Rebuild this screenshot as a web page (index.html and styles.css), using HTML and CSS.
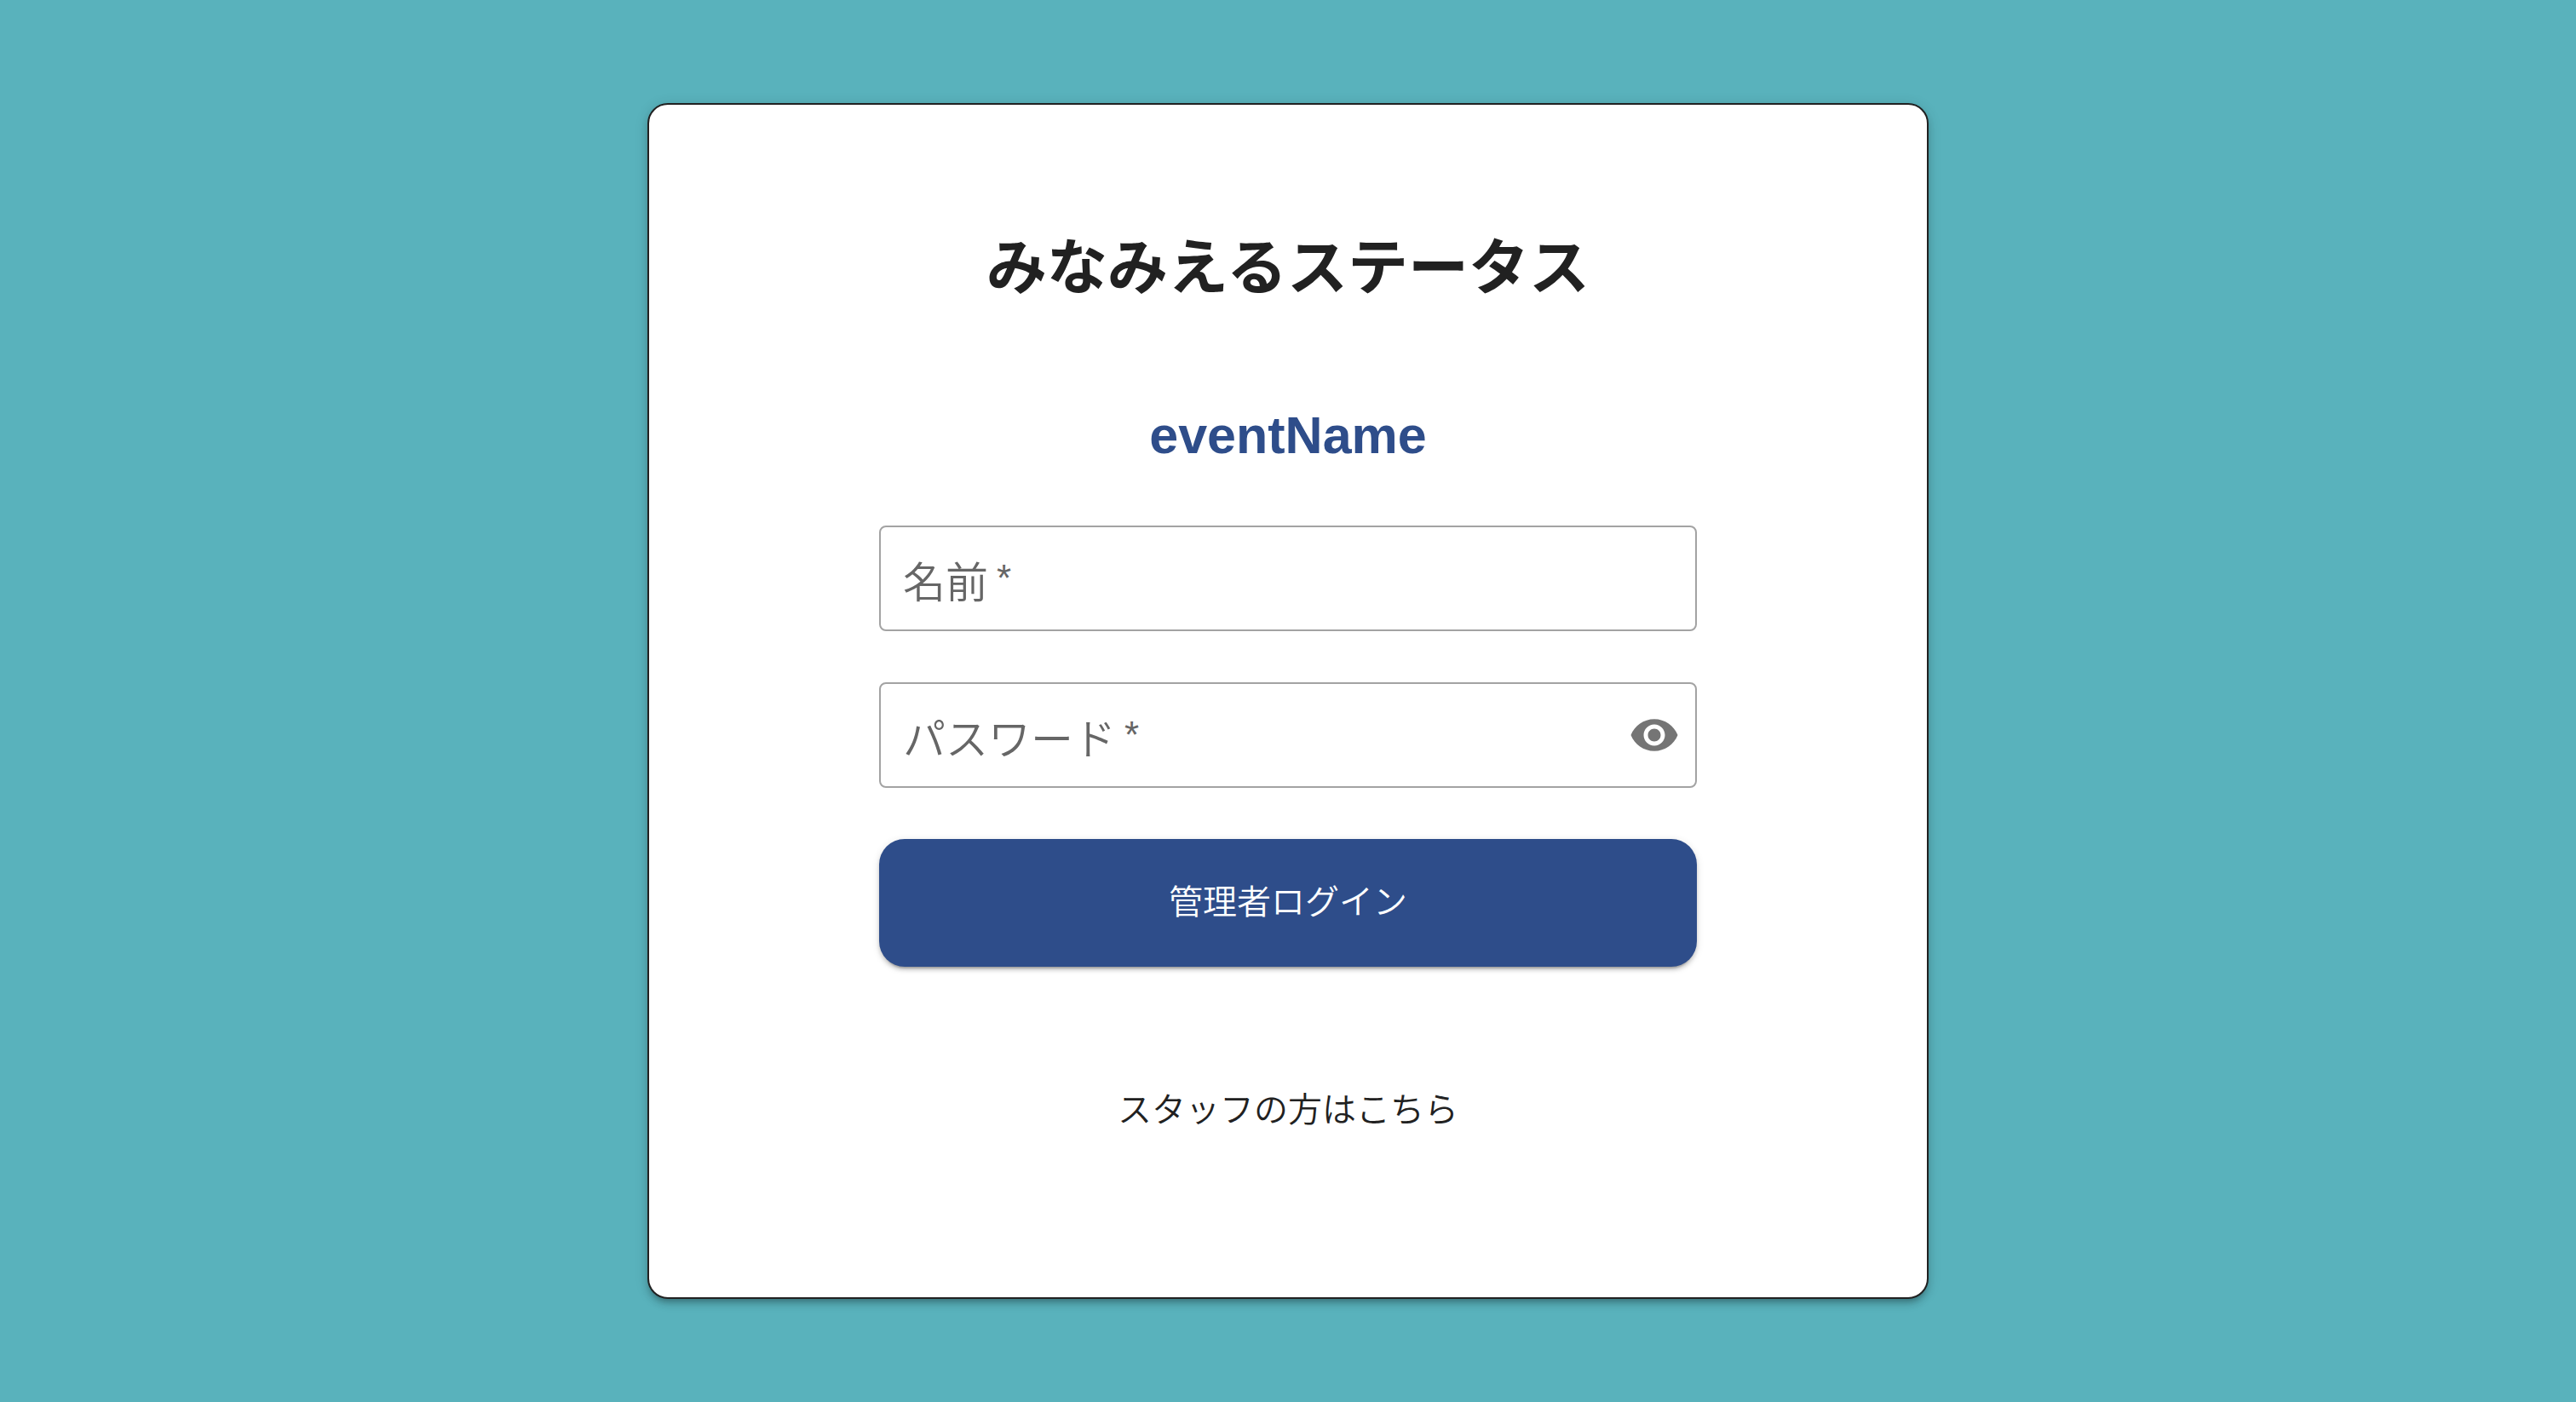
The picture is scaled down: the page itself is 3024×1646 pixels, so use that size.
FILE: index.html
```html
<!DOCTYPE html>
<html lang="ja">
<head>
<meta charset="utf-8">
<meta name="viewport" content="width=device-width, initial-scale=1">
<title>みなみえるステータス</title>
<link rel="stylesheet" href="styles.css">
</head>
<body>
<main class="card">
  <h1 class="title">みなみえるステータス</h1>
  <h2 class="event">eventName</h2>
  <form class="form">
    <div class="field">
      <input class="input" id="name" type="text" placeholder=" " required>
      <label class="label" for="name">名前<span class="required">*</span></label>
    </div>
    <div class="field">
      <input class="input" id="password" type="password" placeholder=" " required>
      <label class="label" for="password">パスワード<span class="required">*</span></label>
      <button class="toggle" type="button" aria-label="パスワードを表示">
        <svg class="eye" viewBox="0 0 24 24" aria-hidden="true"><path d="M12 4.5C7 4.5 2.73 7.61 1 12c1.73 4.39 6 7.5 11 7.5s9.27-3.11 11-7.5c-1.73-4.39-6-7.5-11-7.5zM12 17c-2.76 0-5-2.24-5-5s2.24-5 5-5 5 2.24 5 5-2.24 5-5 5zm0-8c-1.66 0-3 1.34-3 3s1.34 3 3 3 3-1.34 3-3-1.34-3-3-3z"/></svg>
      </button>
    </div>
    <button class="submit" type="submit">管理者ログイン</button>
  </form>
  <a class="staff" href="#">スタッフの方はこちら</a>
</main>
</body>
</html>
```
FILE: styles.css
```css
* {
  box-sizing: border-box;
}

body {
  display: flex;
  justify-content: center;
  align-items: center;
  min-height: 100vh;
  margin: 0;
  background: #59b2bc;
  color: #212121;
  font-family: "Liberation Sans", "Noto Sans CJK JP", sans-serif;
  font-weight: 350;
}

.card {
  display: flex;
  flex-direction: column;
  align-items: center;
  width: 50%;
  max-width: 1504px;
  padding: 142px 0 190px;
  border: 2px solid #212121;
  border-radius: 24px;
  background: #fff;
  box-shadow:
    0 6px 6px -4px rgba(0, 0, 0, 0.2),
    0 6px 8px rgba(0, 0, 0, 0.14),
    0 2px 16px rgba(0, 0, 0, 0.12);
}

.title {
  margin: 0;
  font-size: 71px;
  line-height: 100px;
  font-weight: 700;
}

.event {
  margin: 104px 0 64px;
  color: #2e4d8a;
  font-size: 61px;
  line-height: 84px;
  font-weight: 700;
}

.form {
  display: flex;
  flex-direction: column;
  gap: 60px;
  width: 64%;
}

.field {
  position: relative;
}

.input {
  display: block;
  width: 100%;
  height: 124px;
  padding: 0 28px;
  border: 2px solid #a3a3a3;
  border-radius: 8px;
  background: transparent;
  font: inherit;
  font-size: 50px;
}

.label {
  position: absolute;
  left: 28px;
  top: 32px;
  color: #666;
  font-size: 50px;
  line-height: 72px;
  pointer-events: none;
}

.input:not(:placeholder-shown) + .label {
  top: -36px;
  font-size: 36px;
  background: #fff;
}

.required {
  margin-left: 10px;
  font-size: 44px;
  line-height: 1;
  vertical-align: 8px;
}

.toggle {
  position: absolute;
  top: 0;
  right: 20px;
  display: flex;
  align-items: center;
  height: 100%;
  padding: 0;
  border: 0;
  background: none;
}

.eye {
  width: 60px;
  height: 60px;
  fill: #757575;
}

.submit {
  height: 150px;
  padding: 0 0 8px;
  border: 0;
  border-radius: 30px;
  background: #2e4d8a;
  box-shadow:
    0 6px 2px -4px rgba(0, 0, 0, 0.2),
    0 4px 4px rgba(0, 0, 0, 0.14),
    0 2px 10px rgba(0, 0, 0, 0.12);
  color: #fff;
  font: inherit;
  font-size: 40px;
}

.staff {
  margin-top: 138px;
  color: #212121;
  font-size: 40px;
  line-height: 60px;
  text-decoration: none;
}
```
